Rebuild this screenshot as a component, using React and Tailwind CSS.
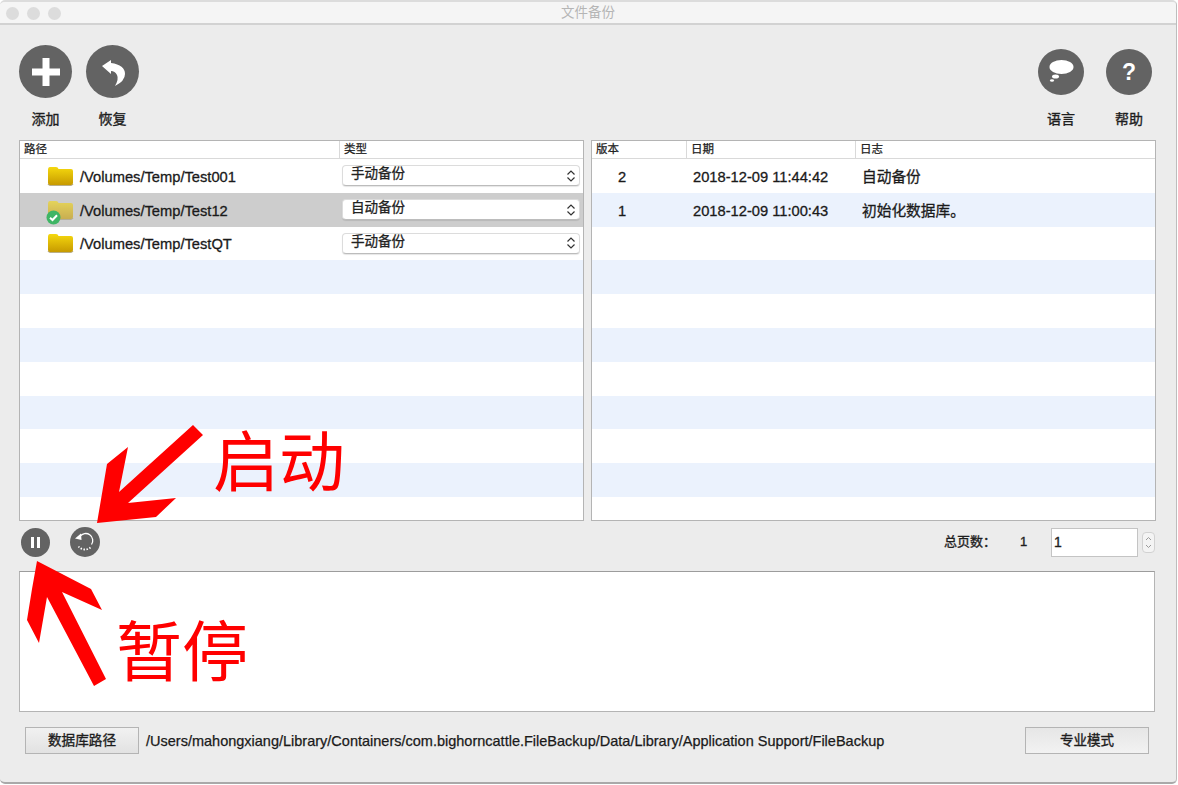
import React from "react";

const FONT = "font-['Liberation_Sans','Noto_Sans_CJK_SC',sans-serif]";
const CJK = "[-webkit-text-stroke:0.35px_#1e1e1e] text-[#1e1e1e] whitespace-nowrap";
const LATIN = "text-[14.7px] text-[#1a1a1a] [-webkit-text-stroke:0.3px_#1a1a1a] whitespace-nowrap";

function Folder({ faded, check }) {
  return (
    <span className="relative block w-[27px] h-[20px]">
      <svg width="27" height="20" viewBox="0 0 27 20" className={faded ? "opacity-60" : ""}>
        <defs>
          <linearGradient id={faded ? "fg2" : "fg1"} x1="0" y1="0" x2="0" y2="1">
            <stop offset="0" stopColor="#f5d80e" />
            <stop offset="1" stopColor="#c79a00" />
          </linearGradient>
        </defs>
        <path d="M1 4 Q1 1 3 1 H9 Q11 1 11.500 3 H24 Q26 3 26 5 V17 Q26 19 24 19 H3 Q1 19 1 17 Z" fill={`url(#${faded ? "fg2" : "fg1"})`} />
        <path d="M1 18 Q1 19 3 19.500 H24 Q26 19 26 18" fill="none" stroke="#8a7a3a" strokeWidth="1" opacity="0.6" />
      </svg>
      {check && (
        <svg width="15" height="15" viewBox="0 0 15 15" className="absolute left-[-1px] top-[10px]">
          <circle cx="7.500" cy="7.500" r="7" fill="#3fb565" />
          <path d="M4 7.800 L6.500 10 L11 5.200" fill="none" stroke="#fff" strokeWidth="2" />
        </svg>
      )}
    </span>
  );
}

function Select({ value }) {
  return (
    <div className="h-[21px] w-[238px] rounded-[4px] bg-white border border-[#dcdcdc] border-b-[#bcbcbc] shadow-[0_1px_1px_rgba(0,0,0,0.1)] flex items-center pl-[8px] pr-[3px] text-[13.5px] [-webkit-text-stroke:0.3px_#222] text-[#222]">
      <span className="flex-1 -mt-[3px]">{value}</span>
      <svg width="10" height="14" viewBox="0 0 10 14">
        <path d="M1.500 5.500 L5 2 L8.500 5.500 M1.500 8.500 L5 12 L8.500 8.500" fill="none" stroke="#333" strokeWidth="1.200" />
      </svg>
    </div>
  );
}

const ROWS = [
  { path: "/Volumes/Temp/Test001", type: "手动备份" },
  { path: "/Volumes/Temp/Test12", type: "自动备份", sel: true },
  { path: "/Volumes/Temp/TestQT", type: "手动备份" },
];
const VERS = [
  { v: "2", d: "2018-12-09 11:44:42", l: "自动备份" },
  { v: "1", d: "2018-12-09 11:00:43", l: "初始化数据库。" },
];
const NUM = Array.from({ length: 11 }, (_, i) => i);

export default function App() {
  return (
    <div className={`${FONT} relative w-[1178px] h-[785px] overflow-hidden bg-white`}>
      <div className="w-[1177px] h-[784px] flex flex-col bg-[#ececec] rounded-[5px] border-t-2 border-t-[#dcdcdc] border-r border-r-[#bdbdbd] border-b-2 border-b-[#a9a9a9] overflow-hidden">
        {/* title bar */}
        <div className="relative h-[23px] shrink-0 bg-[#f5f5f5] border-b-2 border-b-[#d2d2d2] flex items-center justify-center">
          <div className="absolute left-[6px] top-[5px] flex gap-[8px]">
            <span className="w-[13px] h-[13px] rounded-full bg-[#dcdcdc]" />
            <span className="w-[13px] h-[13px] rounded-full bg-[#dcdcdc]" />
            <span className="w-[13px] h-[13px] rounded-full bg-[#dcdcdc]" />
          </div>
          <span className="text-[13.5px] text-[#b5b5b5] pt-[2px]">文件备份</span>
        </div>

        {/* toolbar */}
        <div className="h-[115px] shrink-0 flex justify-between pl-[19px] pr-[24px]">
          <div className="flex gap-[14px] pt-[20px]">
            <div className="w-[53px] flex flex-col items-center gap-[11px]">
              <div className="w-[53px] h-[53px] rounded-full bg-[#636363] flex items-center justify-center">
                <svg width="30" height="30" viewBox="0 0 30 30"><path d="M11.500 1 H18.500 V11.500 H29 V18.500 H18.500 V29 H11.500 V18.500 H1 V11.500 H11.500 Z" fill="#fff" /></svg>
              </div>
              <span className={`text-[14px] ${CJK}`}>添加</span>
            </div>
            <div className="w-[53px] flex flex-col items-center gap-[11px]">
              <div className="w-[53px] h-[53px] rounded-full bg-[#636363]">
                <svg width="53" height="53" viewBox="0 0 53 53">
                  <path d="M16 21 L25 15 L25 18 Q39 20 39 29 Q39 36 29 41 Q33 34 31 30 Q29 26 25 26 L25 29 Z" fill="#fff" />
                </svg>
              </div>
              <span className={`text-[14px] ${CJK}`}>恢复</span>
            </div>
          </div>
          <div className="flex gap-[22px] pt-[24px]">
            <div className="w-[46px] flex flex-col items-center gap-[14px]">
              <div className="w-[46px] h-[46px] rounded-full bg-[#636363] flex items-center justify-center">
                <svg width="30" height="32" viewBox="0 0 30 32">
                  <ellipse cx="15.500" cy="11" rx="12" ry="7" fill="#fff" />
                  <ellipse cx="9.500" cy="20.500" rx="3.500" ry="2" fill="#fff" />
                  <ellipse cx="6" cy="24.500" rx="2" ry="1.300" fill="#fff" />
                </svg>
              </div>
              <span className={`text-[14px] ${CJK}`}>语言</span>
            </div>
            <div className="w-[46px] flex flex-col items-center gap-[14px]">
              <div className="w-[46px] h-[46px] rounded-full bg-[#636363] flex items-center justify-center">
                <span className="text-[23px] leading-none font-bold text-white">?</span>
              </div>
              <span className={`text-[14px] ${CJK}`}>帮助</span>
            </div>
          </div>
        </div>

        {/* tables */}
        <div className="h-[381px] shrink-0 grid grid-cols-[565px_565px] gap-[7px] pl-[19px]">
          <div className="bg-white border border-[#b4b4b4] overflow-hidden flex flex-col">
            <div className="h-[18px] shrink-0 flex items-center border-b border-b-[#d9d9d9] text-[11.5px] [-webkit-text-stroke:0.25px_#222] text-[#222]">
              <span className="w-[320px] pl-[4px] border-r border-r-[#d9d9d9]">路径</span>
              <span className="pl-[4px]">类型</span>
            </div>
            {NUM.map((i) => {
              const r = ROWS[i];
              const bg = r?.sel ? "bg-[#cdcdcd]" : i % 2 === 1 ? "bg-[#ebf2fd]" : "bg-white";
              return (
                <div key={i} className={`h-[33.8px] shrink-0 flex items-center ${bg}`}>
                  {r && (
                    <>
                      <div className="w-[322px] flex items-center pl-[27px] gap-[6px]">
                        <Folder faded={r.sel} check={r.sel} />
                        <span className={`${LATIN} mt-[2px]`}>{r.path}</span>
                      </div>
                      <Select value={r.type} />
                    </>
                  )}
                </div>
              );
            })}
          </div>
          <div className="bg-white border border-[#b4b4b4] overflow-hidden flex flex-col">
            <div className="h-[18px] shrink-0 flex items-center border-b border-b-[#d9d9d9] text-[11.5px] [-webkit-text-stroke:0.25px_#222] text-[#222]">
              <span className="w-[95px] pl-[4px] border-r border-r-[#d9d9d9]">版本</span>
              <span className="w-[169px] pl-[4px] border-r border-r-[#d9d9d9]">日期</span>
              <span className="pl-[4px]">日志</span>
            </div>
            {NUM.map((i) => {
              const r = VERS[i];
              return (
                <div key={i} className={`h-[33.8px] shrink-0 flex items-center ${i % 2 === 1 ? "bg-[#ebf2fd]" : "bg-white"}`}>
                  {r && (
                    <>
                      <span className={`${LATIN} w-[60px] text-center mt-[2px]`}>{r.v}</span>
                      <span className={`${LATIN} w-[210px] pl-[41px] mt-[2px]`}>{r.d}</span>
                      <span className={`${LATIN} text-[13.5px] mt-[2px]`}>{r.l}</span>
                    </>
                  )}
                </div>
              );
            })}
          </div>
        </div>

        {/* controls */}
        <div className="h-[50px] shrink-0 flex items-center pl-[21px] pr-[21px] pb-[8px]">
          <div className="w-[29px] h-[29px] rounded-full bg-[#636363] flex items-center justify-center gap-[3px]">
            <span className="w-[3px] h-[11px] bg-white" />
            <span className="w-[3px] h-[11px] bg-white" />
          </div>
          <div className="ml-[20px] w-[30px] h-[30px] rounded-full bg-[#636363]">
            <svg width="30" height="30" viewBox="0 0 30 30">
              <path d="M10 9.500 A7 7 0 1 1 21.500 17.500" fill="none" stroke="#fff" strokeWidth="1.300" />
              <path d="M5 11.500 L11 6.500 L11.500 13 Z" fill="#fff" />
              <path d="M20.500 20.500 A8.500 8.500 0 0 1 8.500 19.500" fill="none" stroke="#fff" strokeWidth="1.800" strokeDasharray="1.500 1.500" />
            </svg>
          </div>
          <span className={`ml-auto text-[13px] ${CJK}`}>总页数：</span>
          <span className={`w-[12px] ml-[24px] text-[13px] ${CJK}`}>1</span>
          <div className={`ml-[19px] w-[87px] h-[29px] bg-white border border-[#c4c4c4] flex items-center pl-[2px] text-[14px] ${CJK}`}>1</div>
          <div className="ml-[4px] w-[13px] h-[21px] rounded-[4px] bg-[#f4f4f4] border border-[#d2d2d2] flex items-center justify-center">
            <svg width="9" height="15" viewBox="0 0 9 15">
              <path d="M2 5 L4.500 2.500 L7 5 M2 10 L4.500 12.500 L7 10" fill="none" stroke="#9a9a9a" strokeWidth="1" />
            </svg>
          </div>
        </div>

        {/* log */}
        <div className="ml-[19px] mr-[21px] h-[141px] shrink-0 bg-white border border-[#b4b4b4] border-t-[#9c9c9c]" />

        {/* bottom */}
        <div className="flex-1 flex items-start pt-[15px] pl-[25px] pr-[27px]">
          <div className={`w-[114px] h-[27px] pt-[2px] flex items-center justify-center border border-[#b4b4b4] bg-gradient-to-b from-[#f1f1f1] to-[#e2e2e2] text-[13.6px] ${CJK}`}>数据库路径</div>
          <span className="ml-[7px] mt-[6px] text-[14.5px] leading-[17px] text-[#1a1a1a] [-webkit-text-stroke:0.25px_#1a1a1a] whitespace-nowrap">/Users/mahongxiang/Library/Containers/com.bighorncattle.FileBackup/Data/Library/Application Support/FileBackup</span>
          <div className={`ml-auto w-[124px] h-[27px] pt-[2px] flex items-center justify-center border border-[#b4b4b4] bg-gradient-to-b from-[#e6e6e6] to-[#f2f2f2] text-[13.5px] ${CJK}`}>专业模式</div>
        </div>
      </div>

      {/* annotations */}
      <svg width="1178" height="785" className="absolute left-0 top-0 pointer-events-none">
        <polygon points="193,425 203,435 128,503 176,498 156,517 97,523 107,464 128,447 119,492" fill="#ff0000" />
        <polygon points="37,561 91,589 102,610 62,592 106,679 94,686 47,597 39,643 27,620 32,589" fill="#ff0000" />
      </svg>
      <span className="absolute left-[213px] top-[418px] text-[66px] leading-[78px] text-[#ff0000] font-['Noto_Sans_CJK_SC',sans-serif] whitespace-nowrap">启动</span>
      <span className="absolute left-[116px] top-[608px] text-[66px] leading-[78px] text-[#ff0000] font-['Noto_Sans_CJK_SC',sans-serif] whitespace-nowrap">暂停</span>
    </div>
  );
}
